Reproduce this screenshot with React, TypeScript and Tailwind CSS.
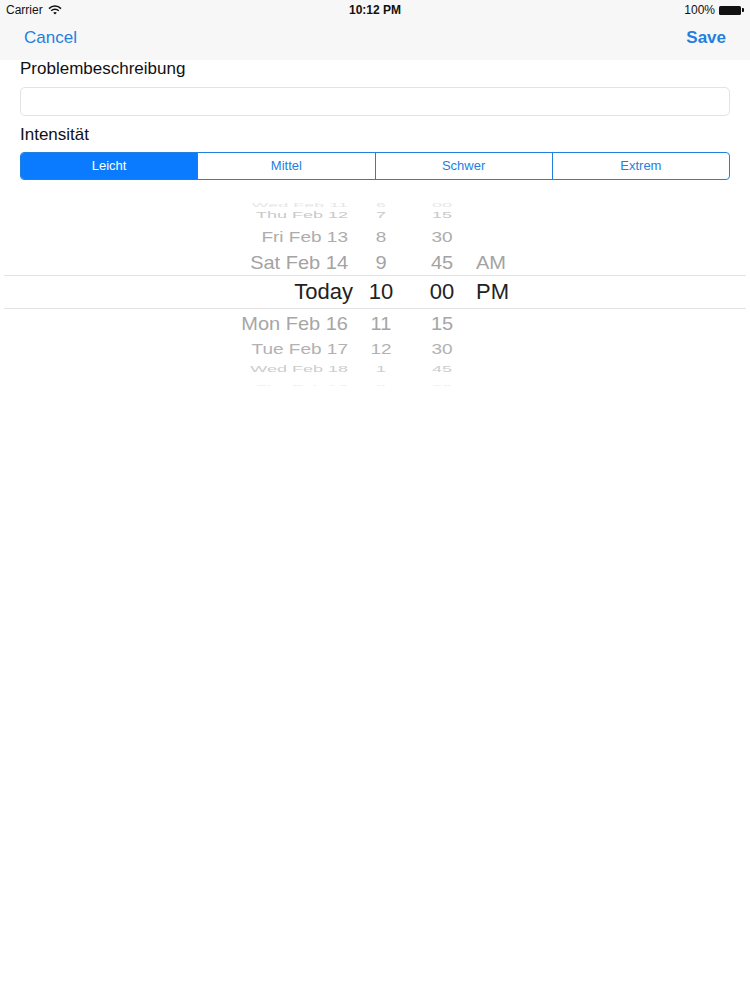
import React from "react";

type Row = {
  date: string;
  hour: string;
  minute: string;
  ampm?: string;
  h: string;
  text: string;
  color: string;
  squash: string;
};

// wheel rows, top to bottom; rows flatten away from the selected one
const ROWS: Row[] = [
  { date: "Wed Feb 11", hour: "6", minute: "00", h: "h-[9px]", text: "text-[18px]", color: "text-[#e6e6e6]", squash: "scale-y-[0.3]" },
  { date: "Thu Feb 12", hour: "7", minute: "15", h: "h-[20px]", text: "text-[18px]", color: "text-[#c9c9c9]", squash: "scale-y-[0.55]" },
  { date: "Fri Feb 13", hour: "8", minute: "30", h: "h-[23px]", text: "text-[19px]", color: "text-[#adadad]", squash: "scale-y-[0.8]" },
  { date: "Sat Feb 14", hour: "9", minute: "45", ampm: "AM", h: "h-[27px]", text: "text-[20px]", color: "text-[#a3a3a3]", squash: "scale-y-[0.95]" },
  { date: "Today", hour: "10", minute: "00", ampm: "PM", h: "h-[34px]", text: "text-[22px]", color: "text-[#222222]", squash: "scale-y-100" },
  { date: "Mon Feb 16", hour: "11", minute: "15", h: "h-[27px]", text: "text-[20px]", color: "text-[#a6a6a6]", squash: "scale-y-[0.95]" },
  { date: "Tue Feb 17", hour: "12", minute: "30", h: "h-[24px]", text: "text-[19px]", color: "text-[#b2b2b2]", squash: "scale-y-[0.78]" },
  { date: "Wed Feb 18", hour: "1", minute: "45", h: "h-[18px]", text: "text-[18px]", color: "text-[#cdcdcd]", squash: "scale-y-[0.5]" },
  { date: "Thu Feb 19", hour: "2", minute: "00", h: "h-[10px]", text: "text-[18px]", color: "text-[#ececec]", squash: "scale-y-[0.28]" },
];

function Wifi() {
  return (
    <svg width="14" height="10" viewBox="0 0 14 10" className="ml-[5px]">
      <path d="M1 3.6 A8.5 8.5 0 0 1 13 3.6" stroke="#111" strokeWidth="1.5" fill="none" />
      <path d="M3.2 5.8 A5.4 5.4 0 0 1 10.8 5.8" stroke="#111" strokeWidth="1.5" fill="none" />
      <path d="M7 9.6 L5.2 7.8 A2.6 2.6 0 0 1 8.8 7.8 Z" fill="#111" />
    </svg>
  );
}

function Battery() {
  return (
    <div className="ml-[4px] flex items-center">
      <div className="h-[9px] w-[22px] rounded-[1.5px] bg-[#111]" />
      <div className="ml-[1px] h-[4px] w-[2px] rounded-r-[1px] bg-[#111]" />
    </div>
  );
}

const SEGMENTS = ["Leicht", "Mittel", "Schwer", "Extrem"];

export default function App() {
  return (
    <div className="min-h-[1000px] w-[750px] bg-white font-['Liberation_Sans',Arial,sans-serif]">
      <div className="bg-[#f7f7f7]">
        <div className="flex h-[20px] items-center justify-between px-[6px] text-[12px] text-[#111]">
          <div className="flex w-[150px] items-center">
            Carrier
            <Wifi />
          </div>
          <div className="font-bold">10:12 PM</div>
          <div className="flex w-[150px] items-center justify-end">
            100%
            <Battery />
          </div>
        </div>
        <div className="flex h-[40px] items-center justify-between px-[24px] pb-[4px] text-[17px] text-[#1f80e0]">
          <span>Cancel</span>
          <span className="font-bold">Save</span>
        </div>
      </div>

      <div className="px-[20px]">
        <div className="h-[27px] text-[17px] leading-[18px] text-[#111]">Problembeschreibung</div>
        <div className="h-[29px] rounded-[5px] border border-[#e3e3e3] bg-white" />
        <div className="flex h-[36px] items-center text-[17px] text-[#111]">
          <span className="translate-y-[1px]">Intensität</span>
        </div>
        <div className="flex h-[28px] overflow-hidden rounded-[4px] border border-[#1f80e0] text-[13px]">
          {SEGMENTS.map((s, i) => (
            <div
              key={s}
              className={
                "flex flex-1 items-center justify-center " +
                (i === 0 ? "bg-[#0a7bff] text-white" : "border-l border-[#1f80e0] text-[#1f80e0]")
              }
            >
              {s}
            </div>
          ))}
        </div>
      </div>

      <div className="mx-[4px] mt-[16px] h-[190px] overflow-hidden">
        {ROWS.map((r) => {
          const selected = r.date === "Today";
          const cell = "leading-none " + r.text + " " + r.color + " " + r.squash;
          return (
            <div
              key={r.date}
              className={
                "grid grid-cols-[344px_66px_56px_1fr] items-center " +
                r.h +
                (selected ? " border-y border-[#e2e2e2]" : "")
              }
            >
              <div className={"whitespace-nowrap text-right " + cell + (selected ? " translate-x-[5px]" : "")}>
                {r.date}
              </div>
              <div className={"text-center " + cell}>{r.hour}</div>
              <div className={"text-center " + cell}>{r.minute}</div>
              <div className={"pl-[6px] " + cell}>{r.ampm ?? ""}</div>
            </div>
          );
        })}
      </div>
    </div>
  );
}
